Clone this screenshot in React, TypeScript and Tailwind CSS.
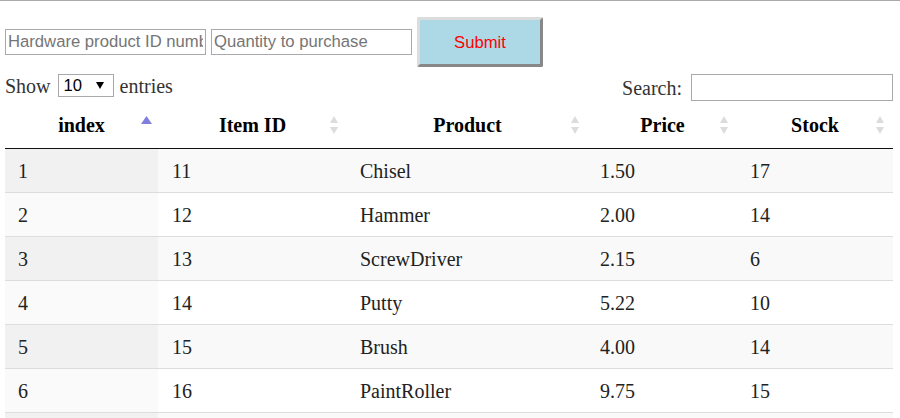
import React from "react";

const ROWS = [
  { index: "1", id: "11", product: "Chisel", price: "1.50", stock: "17" },
  { index: "2", id: "12", product: "Hammer", price: "2.00", stock: "14" },
  { index: "3", id: "13", product: "ScrewDriver", price: "2.15", stock: "6" },
  { index: "4", id: "14", product: "Putty", price: "5.22", stock: "10" },
  { index: "5", id: "15", product: "Brush", price: "4.00", stock: "14" },
  { index: "6", id: "16", product: "PaintRoller", price: "9.75", stock: "15" },
  // next row only peeks in at the bottom edge
  { index: "", id: "", product: "", price: "", stock: "" },
];

const HEADERS = ["index", "Item ID", "Product", "Price", "Stock"];

const GRID = "grid grid-cols-[153px_189px_241px_149px_156px]";

function SortBoth() {
  return (
    <svg width="8" height="18" viewBox="0 0 8 18" className="absolute right-[9px] top-1/2 -translate-y-1/2">
      <path d="M4 0 L8 7 L0 7 Z" fill="#dcdcdc" />
      <path d="M0 11 L8 11 L4 18 Z" fill="#dcdcdc" />
    </svg>
  );
}

function SortAsc() {
  return (
    <svg width="11" height="8" viewBox="0 0 11 8" className="absolute right-[6px] top-[15px]">
      <path d="M5.5 0 L11 8 L0 8 Z" fill="#7f7fe1" />
    </svg>
  );
}

export default function App() {
  return (
    <div className="h-[418px] w-[900px] overflow-hidden bg-white border-t border-[#aaaaaa]">
      <div className="pl-[5px] pr-[7px] font-['Liberation_Serif',serif] text-[20px] text-[#222]">
        {/* purchase form */}
        <div className="mt-[16px] flex items-center gap-[5px] font-['Liberation_Sans',Arial,sans-serif]">
          <input
            type="text"
            placeholder="Hardware product ID number"
            className="h-[26px] w-[201px] border border-[#a9a9a9] px-[2px] text-[16.67px] text-black placeholder:text-[#757575] outline-none"
          />
          <input
            type="text"
            placeholder="Quantity to purchase"
            className="h-[26px] w-[201px] border border-[#a9a9a9] px-[2px] text-[16.67px] text-black placeholder:text-[#757575] outline-none"
          />
          <button
            type="button"
            className="h-[50px] w-[126px] rounded-[2px] border-[3px] border-t-[#dcdcdc] border-l-[#dcdcdc] border-b-[#888888] border-r-[#888888] bg-[#add8e6] text-[16.67px] text-[#ff0000]"
          >
            Submit
          </button>
        </div>

        {/* table controls */}
        <div className="mt-[7px] flex h-[27px] items-start justify-between">
          <div className="flex h-[23px] items-center text-[#333]">
            <span>Show</span>
            <div className="relative ml-[7px] mr-[6px]">
              <select className="block h-[23px] w-[56px] appearance-none border border-[#a9a9a9] bg-white pl-[5px] font-['Liberation_Sans',Arial,sans-serif] text-[16.67px] leading-[21px] text-black outline-none">
                <option>10</option>
                <option>25</option>
                <option>50</option>
                <option>100</option>
              </select>
              <svg width="8" height="7" viewBox="0 0 8 7" className="pointer-events-none absolute right-[10px] top-[8px]">
                <path d="M0 0 L8 0 L4 7 Z" fill="#000" />
              </svg>
            </div>
            <span>entries</span>
          </div>
          <div className="flex h-[27px] items-center gap-[9px] text-[#333]">
            <span>Search:</span>
            <input type="text" className="h-[27px] w-[202px] border border-[#a9a9a9] outline-none" />
          </div>
        </div>

        {/* table */}
        <div className="w-[888px]">
          <div className={`${GRID} h-[48px] border-b border-[#111] font-bold text-black`}>
            {HEADERS.map((h, i) => (
              <div key={h} className="relative flex items-center justify-center">
                <span>{h}</span>
                {i === 0 ? <SortAsc /> : <SortBoth />}
              </div>
            ))}
          </div>
          {ROWS.map((r, ri) => {
            const odd = ri % 2 === 0;
            return (
              <div
                key={ri}
                className={`${GRID} ${ri === 0 ? "h-[43px]" : "h-[44px] border-t border-[#dddddd]"} ${odd ? "bg-[#f9f9f9]" : "bg-white"} text-[#222]`}
              >
                <div className={`flex items-center pl-[13px] ${odd ? "bg-[#f1f1f1]" : "bg-[#fafafa]"}`}>{r.index}</div>
                <div className="flex items-center pl-[14px]">{r.id}</div>
                <div className="flex items-center pl-[13px]">{r.product}</div>
                <div className="flex items-center pl-[12px]">{r.price}</div>
                <div className="flex items-center pl-[13px]">{r.stock}</div>
              </div>
            );
          })}
        </div>
      </div>
    </div>
  );
}
